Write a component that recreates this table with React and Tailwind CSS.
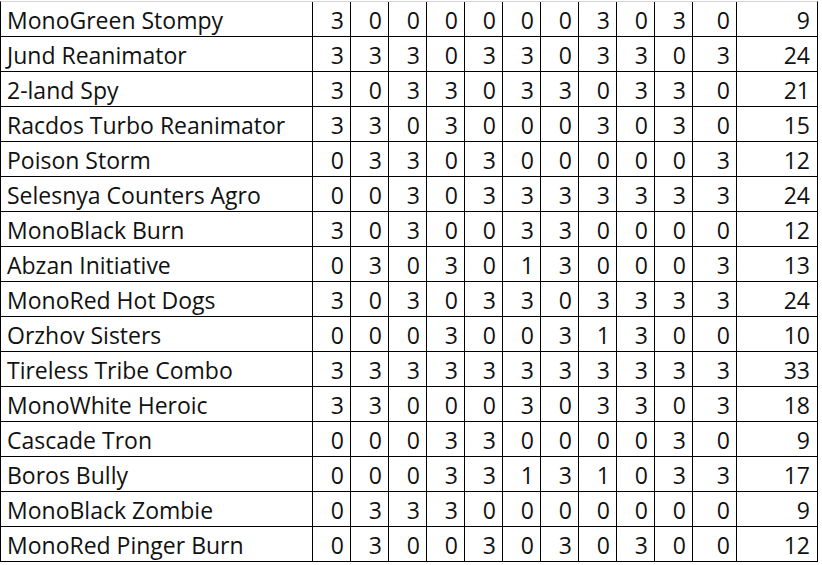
import React from "react";

const rows = [
  ["MonoGreen Stompy", [3, 0, 0, 0, 0, 0, 0, 3, 0, 3, 0], 9],
  ["Jund Reanimator", [3, 3, 3, 0, 3, 3, 0, 3, 3, 0, 3], 24],
  ["2-land Spy", [3, 0, 3, 3, 0, 3, 3, 0, 3, 3, 0], 21],
  ["Racdos Turbo Reanimator", [3, 3, 0, 3, 0, 0, 0, 3, 0, 3, 0], 15],
  ["Poison Storm", [0, 3, 3, 0, 3, 0, 0, 0, 0, 0, 3], 12],
  ["Selesnya Counters Agro", [0, 0, 3, 0, 3, 3, 3, 3, 3, 3, 3], 24],
  ["MonoBlack Burn", [3, 0, 3, 0, 0, 3, 3, 0, 0, 0, 0], 12],
  ["Abzan Initiative", [0, 3, 0, 3, 0, 1, 3, 0, 0, 0, 3], 13],
  ["MonoRed Hot Dogs", [3, 0, 3, 0, 3, 3, 0, 3, 3, 3, 3], 24],
  ["Orzhov Sisters", [0, 0, 0, 3, 0, 0, 3, 1, 3, 0, 0], 10],
  ["Tireless Tribe Combo", [3, 3, 3, 3, 3, 3, 3, 3, 3, 3, 3], 33],
  ["MonoWhite Heroic", [3, 3, 0, 0, 0, 3, 0, 3, 3, 0, 3], 18],
  ["Cascade Tron", [0, 0, 0, 3, 3, 0, 0, 0, 0, 3, 0], 9],
  ["Boros Bully", [0, 0, 0, 3, 3, 1, 3, 1, 0, 3, 3], 17],
  ["MonoBlack Zombie", [0, 3, 3, 3, 0, 0, 0, 0, 0, 0, 0], 9],
  ["MonoRed Pinger Burn", [0, 3, 0, 0, 3, 0, 3, 0, 3, 0, 0], 12],
];

export default function App() {
  return (
    <div className="w-[822px] h-[565px] bg-white pt-px" style={{ fontFamily: "'Open Sans', 'Noto Sans', sans-serif" }}>
      <div className="w-[818px] border-t border-[#d4d4d4] border-b border-b-black border-x border-x-black">
        <div className="grid grid-cols-[311px_repeat(10,37px)_43px_80px] gap-px bg-black text-[23px] text-[#111]">
          {rows.map(([name, vals, total]) => (
            <React.Fragment key={name}>
              <div className="h-[34px] bg-white flex items-end pl-[6px] pb-[4px] leading-none whitespace-nowrap">{name}</div>
              {vals.map((v, i) => (
                <div key={i} className="h-[34px] bg-white flex items-end justify-end pr-[6px] pb-[4px] leading-none">{v}</div>
              ))}
              <div className="h-[34px] bg-white flex items-end justify-end pr-[7px] pb-[4px] leading-none">{total}</div>
            </React.Fragment>
          ))}
        </div>
      </div>
    </div>
  );
}
